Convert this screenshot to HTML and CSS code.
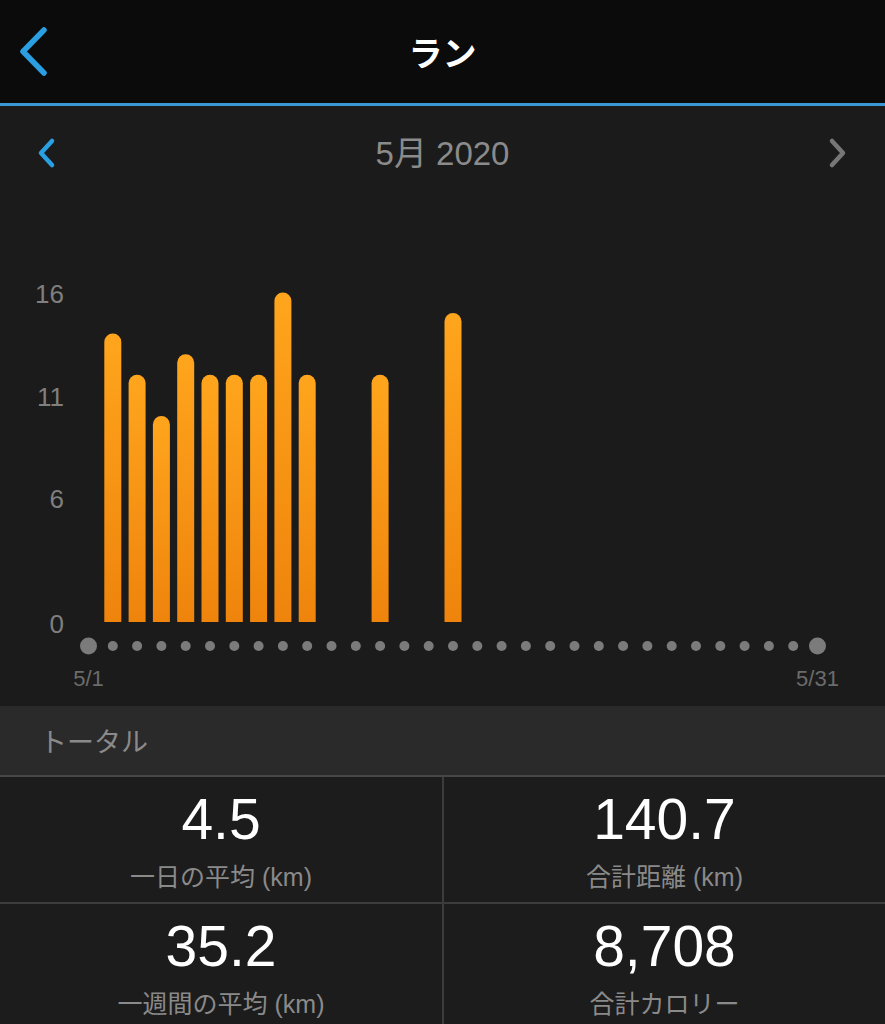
FILE: index.html
```html
<!DOCTYPE html>
<html lang="ja">
<head>
<meta charset="utf-8">
<title>ラン</title>
<link rel="stylesheet" href="styles.css">
</head>
<body>
<header class="header">
  <div class="header-left">
    <svg class="back-icon" width="36" height="56" viewBox="0 0 36 56">
      <path d="M25 6 L4 27.5 L25 49" fill="none" stroke="#2a9fe2" stroke-width="5.5" stroke-linecap="round" stroke-linejoin="round"/>
    </svg>
  </div>
  <h1 class="title">ラン</h1>
  <div class="header-right"></div>
</header>

<nav class="month-nav">
  <svg class="chev chev-left" width="22" height="32" viewBox="0 0 22 32">
    <path d="M16 4 L5 16 L16 28" fill="none" stroke="#2a9fe2" stroke-width="4.5" stroke-linecap="round" stroke-linejoin="round"/>
  </svg>
  <div class="month">5月 2020</div>
  <svg class="chev chev-right" width="22" height="32" viewBox="0 0 22 32">
    <path d="M5 4 L16 16 L5 28" fill="none" stroke="#777777" stroke-width="4.5" stroke-linecap="round" stroke-linejoin="round"/>
  </svg>
</nav>

<section class="chart">
  <svg class="chart-svg" width="885" height="506" viewBox="0 0 885 506">
    <defs>
      <linearGradient id="barGrad" x1="0" y1="0" x2="0" y2="1">
        <stop offset="0" stop-color="#ffa51d"/>
        <stop offset="1" stop-color="#ef840c"/>
      </linearGradient>
    </defs>
    <text class="axis" x="64" y="103" text-anchor="end">16</text>
    <text class="axis" x="64" y="206" text-anchor="end">11</text>
    <text class="axis" x="64" y="308" text-anchor="end">6</text>
    <text class="axis" x="64" y="433" text-anchor="end">0</text>

    <g fill="url(#barGrad)">
      <path d="M104.3 422 V142.1 A8.5 8.5 0 0 1 121.3 142.1 V422 Z"/>
      <path d="M128.6 422 V183.3 A8.5 8.5 0 0 1 145.6 183.3 V422 Z"/>
      <path d="M152.9 422 V224.5 A8.5 8.5 0 0 1 169.9 224.5 V422 Z"/>
      <path d="M177.2 422 V162.7 A8.5 8.5 0 0 1 194.2 162.7 V422 Z"/>
      <path d="M201.5 422 V183.3 A8.5 8.5 0 0 1 218.5 183.3 V422 Z"/>
      <path d="M225.8 422 V183.3 A8.5 8.5 0 0 1 242.8 183.3 V422 Z"/>
      <path d="M250.1 422 V183.3 A8.5 8.5 0 0 1 267.1 183.3 V422 Z"/>
      <path d="M274.4 422 V100.9 A8.5 8.5 0 0 1 291.4 100.9 V422 Z"/>
      <path d="M298.7 422 V183.3 A8.5 8.5 0 0 1 315.7 183.3 V422 Z"/>
      <path d="M371.6 422 V183.3 A8.5 8.5 0 0 1 388.6 183.3 V422 Z"/>
      <path d="M444.5 422 V121.5 A8.5 8.5 0 0 1 461.5 121.5 V422 Z"/>
    </g>

    <g fill="#7b7b7b">
      <circle cx="88.5" cy="446" r="8.5"/>
      <circle cx="112.8" cy="446" r="5"/>
      <circle cx="137.1" cy="446" r="5"/>
      <circle cx="161.4" cy="446" r="5"/>
      <circle cx="185.7" cy="446" r="5"/>
      <circle cx="210" cy="446" r="5"/>
      <circle cx="234.3" cy="446" r="5"/>
      <circle cx="258.6" cy="446" r="5"/>
      <circle cx="282.9" cy="446" r="5"/>
      <circle cx="307.2" cy="446" r="5"/>
      <circle cx="331.5" cy="446" r="5"/>
      <circle cx="355.8" cy="446" r="5"/>
      <circle cx="380.1" cy="446" r="5"/>
      <circle cx="404.4" cy="446" r="5"/>
      <circle cx="428.7" cy="446" r="5"/>
      <circle cx="453" cy="446" r="5"/>
      <circle cx="477.3" cy="446" r="5"/>
      <circle cx="501.6" cy="446" r="5"/>
      <circle cx="525.9" cy="446" r="5"/>
      <circle cx="550.2" cy="446" r="5"/>
      <circle cx="574.5" cy="446" r="5"/>
      <circle cx="598.8" cy="446" r="5"/>
      <circle cx="623.1" cy="446" r="5"/>
      <circle cx="647.4" cy="446" r="5"/>
      <circle cx="671.7" cy="446" r="5"/>
      <circle cx="696" cy="446" r="5"/>
      <circle cx="720.3" cy="446" r="5"/>
      <circle cx="744.6" cy="446" r="5"/>
      <circle cx="768.9" cy="446" r="5"/>
      <circle cx="793.2" cy="446" r="5"/>
      <circle cx="817.5" cy="446" r="8.5"/>
    </g>

    <text class="date" x="88.5" y="486" text-anchor="middle">5/1</text>
    <text class="date" x="817.5" y="486" text-anchor="middle">5/31</text>
  </svg>
</section>

<div class="totals-header">トータル</div>

<section class="stats">
  <div class="cell">
    <div class="value">4.5</div>
    <div class="label">一日の平均 (km)</div>
  </div>
  <div class="cell">
    <div class="value">140.7</div>
    <div class="label">合計距離 (km)</div>
  </div>
  <div class="cell">
    <div class="value">35.2</div>
    <div class="label">一週間の平均 (km)</div>
  </div>
  <div class="cell">
    <div class="value">8,708</div>
    <div class="label">合計カロリー</div>
  </div>
</section>
</body>
</html>
```

FILE: styles.css
```css
* {
  box-sizing: border-box;
}

html, body {
  margin: 0;
  padding: 0;
}

body {
  width: 885px;
  background: #1b1b1b;
  font-family: "Liberation Sans", "Noto Sans CJK JP", sans-serif;
  overflow: hidden;
}

.header {
  height: 106px;
  background: #0b0b0b;
  border-bottom: 3px solid #3b98d6;
  display: grid;
  grid-template-columns: 1fr auto 1fr;
  align-items: center;
}

.header-left {
  padding-left: 19px;
  display: flex;
  align-items: center;
}

.back-icon {
  display: block;
}

.title {
  margin: 0;
  font-family: "Noto Sans CJK JP", sans-serif;
  font-weight: 700;
  font-size: 34px;
  line-height: 1;
  color: #ffffff;
}

.month-nav {
  height: 94px;
  display: grid;
  grid-template-columns: 1fr auto 1fr;
  align-items: center;
  padding: 0 36px;
}

.chev {
  display: block;
}

.chev-right {
  justify-self: end;
}

.month {
  font-size: 33px;
  color: #8b8b8b;
  line-height: 1;
}

.chart-svg {
  display: block;
}

.axis {
  font-family: "Liberation Sans", sans-serif;
  font-size: 26px;
  fill: #7f7f7f;
}

.date {
  font-family: "Liberation Sans", sans-serif;
  font-size: 22px;
  fill: #6b6b6b;
}

.totals-header {
  height: 71px;
  background: #2a2a2a;
  border-bottom: 2px solid #474747;
  padding-left: 40px;
  display: flex;
  align-items: center;
  font-family: "Noto Sans CJK JP", sans-serif;
  font-size: 27px;
  color: #8a8a8a;
}

.stats {
  display: grid;
  grid-template-columns: 442px 1fr;
  gap: 2px;
  background: #3c3c3c;
}

.cell {
  height: 125px;
  background: #1c1c1c;
  display: flex;
  flex-direction: column;
  align-items: center;
  padding-top: 14px;
}

.value {
  font-size: 57px;
  line-height: 56px;
  color: #ffffff;
}

.label {
  margin-top: 15px;
  font-size: 25px;
  line-height: 30px;
  color: #8a8a8a;
}
```
